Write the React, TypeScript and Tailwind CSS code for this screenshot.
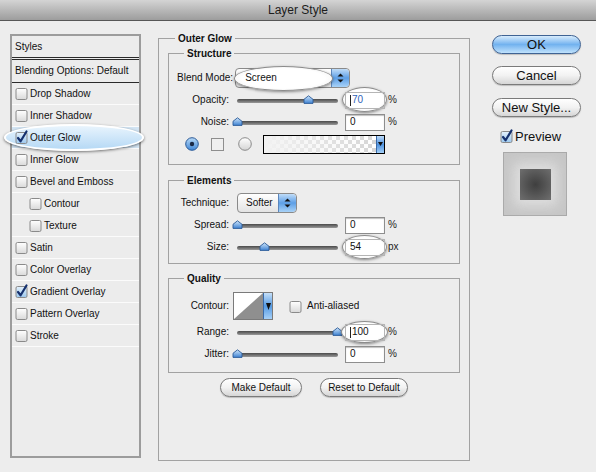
import React from 'react'

type StyleItem = { label: string; checked?: boolean; indent?: boolean; active?: boolean }

const styleItems: StyleItem[] = [
  { label: 'Drop Shadow' },
  { label: 'Inner Shadow' },
  { label: 'Outer Glow', checked: true, active: true },
  { label: 'Inner Glow' },
  { label: 'Bevel and Emboss' },
  { label: 'Contour', indent: true },
  { label: 'Texture', indent: true },
  { label: 'Satin' },
  { label: 'Color Overlay' },
  { label: 'Gradient Overlay', checked: true },
  { label: 'Pattern Overlay' },
  { label: 'Stroke' },
]

function Checkbox({ checked }: { checked?: boolean }) {
  return (
    <svg width="13" height="13" viewBox="0 0 13 13" className="shrink-0 overflow-visible">
      <defs>
        <linearGradient id="cbOff" x1="0" y1="0" x2="0" y2="1">
          <stop offset="0" stopColor="#ffffff" />
          <stop offset="1" stopColor="#d9d9d9" />
        </linearGradient>
        <linearGradient id="cbOn" x1="0" y1="0" x2="0" y2="1">
          <stop offset="0" stopColor="#e4f1fc" />
          <stop offset="1" stopColor="#9cc8ee" />
        </linearGradient>
      </defs>
      <rect x="1" y="1.5" width="11" height="11" rx="1.5" fill={checked ? 'url(#cbOn)' : 'url(#cbOff)'} stroke="#8a8a8a" />
      {checked && (
        <path d="M3 7 L5.6 10.3 L11.5 0.5" fill="none" stroke="#15306e" strokeWidth="2.2" strokeLinecap="round" strokeLinejoin="round" />
      )}
    </svg>
  )
}

function Radio({ selected }: { selected?: boolean }) {
  return (
    <svg width="14" height="14" viewBox="0 0 14 14" className="shrink-0">
      <defs>
        <linearGradient id="rOn" x1="0" y1="0" x2="0" y2="1">
          <stop offset="0" stopColor="#b9dbf8" />
          <stop offset="1" stopColor="#3f86d6" />
        </linearGradient>
        <linearGradient id="rOff" x1="0" y1="0" x2="0" y2="1">
          <stop offset="0" stopColor="#ffffff" />
          <stop offset="1" stopColor="#d4d4d4" />
        </linearGradient>
      </defs>
      <circle cx="7" cy="7" r="6.3" fill={selected ? 'url(#rOn)' : 'url(#rOff)'} stroke={selected ? '#2d5b97' : '#8a8a8a'} />
      {selected && <circle cx="7" cy="7" r="2.2" fill="#1b2a45" />}
    </svg>
  )
}

function Thumb() {
  return (
    <svg width="11" height="9" viewBox="0 0 11 9">
      <defs>
        <linearGradient id="th" x1="0" y1="0" x2="0" y2="1">
          <stop offset="0" stopColor="#cfe6fb" />
          <stop offset="1" stopColor="#3e82d2" />
        </linearGradient>
      </defs>
      <path d="M1 4.3 L5.5 0.8 L10 4.3 V8.4 H1 Z" fill="url(#th)" stroke="#2b5a97" strokeWidth="0.9" />
    </svg>
  )
}

function Slider({ pos }: { pos: number }) {
  return (
    <div className="relative w-[101px] h-[12px] shrink-0">
      <div className="absolute left-0 right-0 top-[5px] h-[4px] rounded-full bg-linear-to-b from-[#4a4a4a] to-[#9a9a9a]" />
      <div className="absolute top-[1px]" style={{ left: pos - 5 }}>
        <Thumb />
      </div>
    </div>
  )
}

function Glow({ className }: { className: string }) {
  return (
    <div
      className={`absolute rounded-[50%] border border-[#8c8c8c] bg-radial from-white from-60% to-[#e6e6e6] shadow-[0_1px_3px_rgba(0,0,0,0.45)] ${className}`}
    />
  )
}

function NumField({
  value,
  unit,
  glow,
  blue,
  cursor,
}: {
  value: string
  unit: string
  glow?: string
  blue?: boolean
  cursor?: boolean
}) {
  return (
    <div className="flex items-center ml-[7px]">
      <div className="relative w-[40px] h-[17px]">
        {glow && <Glow className={glow} />}
        <div
          className={`relative flex items-center h-full pl-[4px] border ${
            glow ? 'border-[#b5b5b5] bg-transparent' : 'border-[#8e8e8e] bg-white shadow-[inset_0_1px_1px_rgba(0,0,0,0.25)]'
          }`}
        >
          {cursor && <span className="w-px h-[11px] bg-[#222] mr-[1px]" />}
          <span className={blue ? 'text-[#2f63b8]' : 'text-[#111]'}>{value}</span>
        </div>
      </div>
      <span className="ml-[3px] text-[#222]">{unit}</span>
    </div>
  )
}

function PopupStepper() {
  return (
    <div className="w-[18px] h-full rounded-r-[4px] border-l border-[#5b86bd] bg-linear-to-b from-[#bfdcf8] via-[#5d9fe6] to-[#a8d2f7] flex flex-col items-center justify-center gap-[2px]">
      <svg width="7" height="4" viewBox="0 0 7 4">
        <path d="M0.5 3.5 L3.5 0.5 L6.5 3.5 Z" fill="#111" />
      </svg>
      <svg width="7" height="4" viewBox="0 0 7 4">
        <path d="M0.5 0.5 L3.5 3.5 L6.5 0.5 Z" fill="#111" />
      </svg>
    </div>
  )
}

function SliderRow({
  label,
  pos,
  value,
  unit,
  glow,
  blue,
  cursor,
}: {
  label: string
  pos: number
  value: string
  unit: string
  glow?: string
  blue?: boolean
  cursor?: boolean
}) {
  return (
    <div className="flex items-center h-[22px]">
      <span className="w-[60px] text-right shrink-0">{label}</span>
      <div className="ml-[8px]">
        <Slider pos={pos} />
      </div>
      <NumField value={value} unit={unit} glow={glow} blue={blue} cursor={cursor} />
    </div>
  )
}

function AquaButton({ children, primary, className = '' }: { children: React.ReactNode; primary?: boolean; className?: string }) {
  return (
    <div
      className={`flex items-center justify-center rounded-full border ${
        primary
          ? 'border-[#3f6394] bg-linear-to-b from-[#d8ecfc] via-[#72b2ef] to-[#c0e2fc]'
          : 'border-[#7a7a7a] bg-linear-to-b from-white via-[#f2f2f2] to-[#d6d6d6]'
      } shadow-[0_1px_1px_rgba(0,0,0,0.2)] text-[#111] ${className}`}
    >
      {children}
    </div>
  )
}

function GradientSwatch() {
  return (
    <div className="flex h-[19px] border border-black">
      <svg width="112" height="17" viewBox="0 0 112 17">
        <defs>
          <pattern id="chk" width="8" height="8" patternUnits="userSpaceOnUse">
            <rect width="8" height="8" fill="#ffffff" />
            <rect width="4" height="4" fill="#d6d6d6" />
            <rect x="4" y="4" width="4" height="4" fill="#d6d6d6" />
          </pattern>
          <linearGradient id="fade" x1="0" y1="0" x2="1" y2="0">
            <stop offset="0" stopColor="#f2f2f2" stopOpacity="1" />
            <stop offset="1" stopColor="#f2f2f2" stopOpacity="0" />
          </linearGradient>
        </defs>
        <rect width="112" height="17" fill="url(#chk)" />
        <rect width="112" height="17" fill="url(#fade)" />
      </svg>
      <div className="w-[8px] h-full bg-linear-to-b from-[#bcdaf8] via-[#4f93e0] to-[#a3cff7] border-l border-[#3a6aa8] flex items-center justify-center">
        <svg width="5" height="4" viewBox="0 0 5 4">
          <path d="M0 0 L5 0 L2.5 4 Z" fill="#111" />
        </svg>
      </div>
    </div>
  )
}

function ContourSwatch() {
  return (
    <div className="flex w-[40px] h-[28px] border border-[#7a7a7a]">
      <svg width="29" height="26" viewBox="0 0 29 26">
        <rect width="29" height="26" fill="#ffffff" />
        <path d="M0 26 L29 0 L29 26 Z" fill="#8f8f8f" />
      </svg>
      <div className="w-[9px] h-full bg-linear-to-b from-[#c5e0f9] via-[#5399e2] to-[#a6d0f7] border-l border-[#3a6aa8] flex items-center justify-center">
        <svg width="5" height="7" viewBox="0 0 5 7">
          <path d="M0 0 L5 0 L2.5 7 Z" fill="#111" />
        </svg>
      </div>
    </div>
  )
}

export default function App() {
  return (
    <div className="w-[596px] h-[472px] bg-[#ededed] font-['Liberation_Sans',Arial,sans-serif] text-[10px] text-[#111] leading-none overflow-hidden">
      {/* Title bar */}
      <div className="h-[21px] border-b border-[#575757] bg-linear-to-b from-[#d4d4d4] to-[#9d9d9d] flex items-center justify-center text-[12px] text-[#1c1c1c]">
        Layer Style
      </div>

      <div className="flex items-start pt-[13px]">
        {/* Styles list */}
        <div className="ml-[10px] w-[131px] h-[424px] border-2 border-[#9c9c9c] bg-[#ececec]">
          <div className="h-[21px] flex items-center pl-[3px]">Styles</div>
          <div className="h-[3px] border-t border-b border-[#2a2a2a]" />
          <div className="h-[23px] flex items-center pl-[3px] border-b border-[#2a2a2a]">Blending Options: Default</div>
          {styleItems.map((item) => (
            <div
              key={item.label}
              className={`relative flex items-center h-[22px] border-b border-[#fbfbfb] ${item.indent ? 'pl-[17px]' : 'pl-[3px]'} ${
                item.active ? 'bg-[#d2e4f3]' : ''
              }`}
            >
              {item.active && (
                <div className="absolute left-[-8px] top-[-3px] w-[140px] h-[27px] rounded-[50%] border-2 border-white bg-linear-to-b from-[#e8f4fd] to-[#b6d9f5] shadow-[0_1px_3px_rgba(0,0,0,0.55)]" />
              )}
              <div className="relative flex items-center gap-[2px]">
                <Checkbox checked={item.checked} />
                <span>{item.label}</span>
              </div>
            </div>
          ))}
        </div>

        {/* Outer Glow group */}
        <div className="ml-[17px] mt-[4px] w-[312px] h-[423px] border border-[#a2a2a2] px-[9px]">
          <div className="-mt-[7px] ml-[7px] w-fit px-[3px] bg-[#ededed] font-bold leading-[13px]">Outer Glow</div>

          {/* Structure */}
          <div className="mt-[8px] h-[112px] border border-[#a2a2a2]">
            <div className="-mt-[7px] ml-[15px] w-fit px-[3px] bg-[#ededed] font-bold leading-[13px]">Structure</div>
            <div className="pt-[7px] flex flex-col">
              <div className="flex items-center h-[22px] pl-[8px]">
                <span>Blend Mode:</span>
                <div className="relative ml-[2px] w-[115px] h-[20px]">
                  <div className="flex h-full rounded-[4px] border border-[#8a8a8a] bg-linear-to-b from-white to-[#e3e3e3]">
                    <div className="flex-1" />
                    <PopupStepper />
                  </div>
                  <Glow className="left-[-1px] top-[-2px] w-[99px] h-[25px]" />
                  <span className="absolute left-[10px] top-[5px]">Screen</span>
                </div>
              </div>
              <SliderRow label="Opacity:" pos={71} value="70" unit="%" glow="left-[-3px] top-[-5px] w-[45px] h-[25px]" blue cursor />
              <SliderRow label="Noise:" pos={0} value="0" unit="%" />
              <div className="flex items-center h-[22px] pl-[16px]">
                <Radio selected />
                <div className="ml-[12px] w-[13px] h-[13px] border border-[#8e8e8e] bg-[#efefef]" />
                <div className="ml-[14px]">
                  <Radio />
                </div>
                <div className="ml-[11px]">
                  <GradientSwatch />
                </div>
              </div>
            </div>
          </div>

          {/* Elements */}
          <div className="mt-[15px] h-[84px] border border-[#a2a2a2]">
            <div className="-mt-[7px] ml-[15px] w-fit px-[3px] bg-[#ededed] font-bold leading-[13px]">Elements</div>
            <div className="pt-[5px] flex flex-col">
              <div className="flex items-center h-[22px]">
                <span className="w-[60px] text-right shrink-0">Technique:</span>
                <div className="ml-[8px] flex w-[60px] h-[20px] rounded-[4px] border border-[#8a8a8a] bg-linear-to-b from-white to-[#e3e3e3]">
                  <span className="flex-1 flex items-center pl-[8px]">Softer</span>
                  <PopupStepper />
                </div>
              </div>
              <SliderRow label="Spread:" pos={0} value="0" unit="%" />
              <SliderRow label="Size:" pos={27} value="54" unit="px" glow="left-[-3px] top-[-4px] w-[45px] h-[24px]" />
            </div>
          </div>

          {/* Quality */}
          <div className="mt-[14px] h-[95px] border border-[#a2a2a2]">
            <div className="-mt-[7px] ml-[15px] w-fit px-[3px] bg-[#ededed] font-bold leading-[13px]">Quality</div>
            <div className="pt-[6px] flex flex-col">
              <div className="flex items-center h-[30px]">
                <span className="w-[60px] text-right shrink-0">Contour:</span>
                <div className="ml-[4px]">
                  <ContourSwatch />
                </div>
                <div className="ml-[16px]">
                  <Checkbox />
                </div>
                <span className="ml-[5px]">Anti-aliased</span>
              </div>
              <SliderRow label="Range:" pos={100} value="100" unit="%" glow="left-[-4px] top-[-3px] w-[47px] h-[22px]" cursor />
              <SliderRow label="Jitter:" pos={0} value="0" unit="%" />
            </div>
          </div>

          <div className="mt-[5px] flex justify-center gap-[18px]">
            <AquaButton className="w-[82px] h-[19px]">Make Default</AquaButton>
            <AquaButton className="w-[88px] h-[19px]">Reset to Default</AquaButton>
          </div>
        </div>

        {/* Right column */}
        <div className="ml-[22px] mt-[1px] w-[89px] flex flex-col text-[13px]">
          <AquaButton primary className="h-[19px]">OK</AquaButton>
          <AquaButton className="mt-[12px] h-[19px]">Cancel</AquaButton>
          <AquaButton className="mt-[13px] h-[19px]">New Style...</AquaButton>
          <div className="mt-[12px] ml-[8px] flex items-center gap-[2px] h-[14px]">
            <Checkbox checked />
            <span>Preview</span>
          </div>
          <div className="mt-[9px] ml-[11px] w-[64px] h-[64px] border border-[#a9a9a9] bg-[#c6c6c6] flex items-center justify-center">
            <div className="w-[31px] h-[31px] bg-radial from-[#3f3f3f] to-[#6f6f6f] shadow-[0_0_12px_6px_rgba(225,225,225,0.9)]" />
          </div>
        </div>
      </div>
    </div>
  )
}
